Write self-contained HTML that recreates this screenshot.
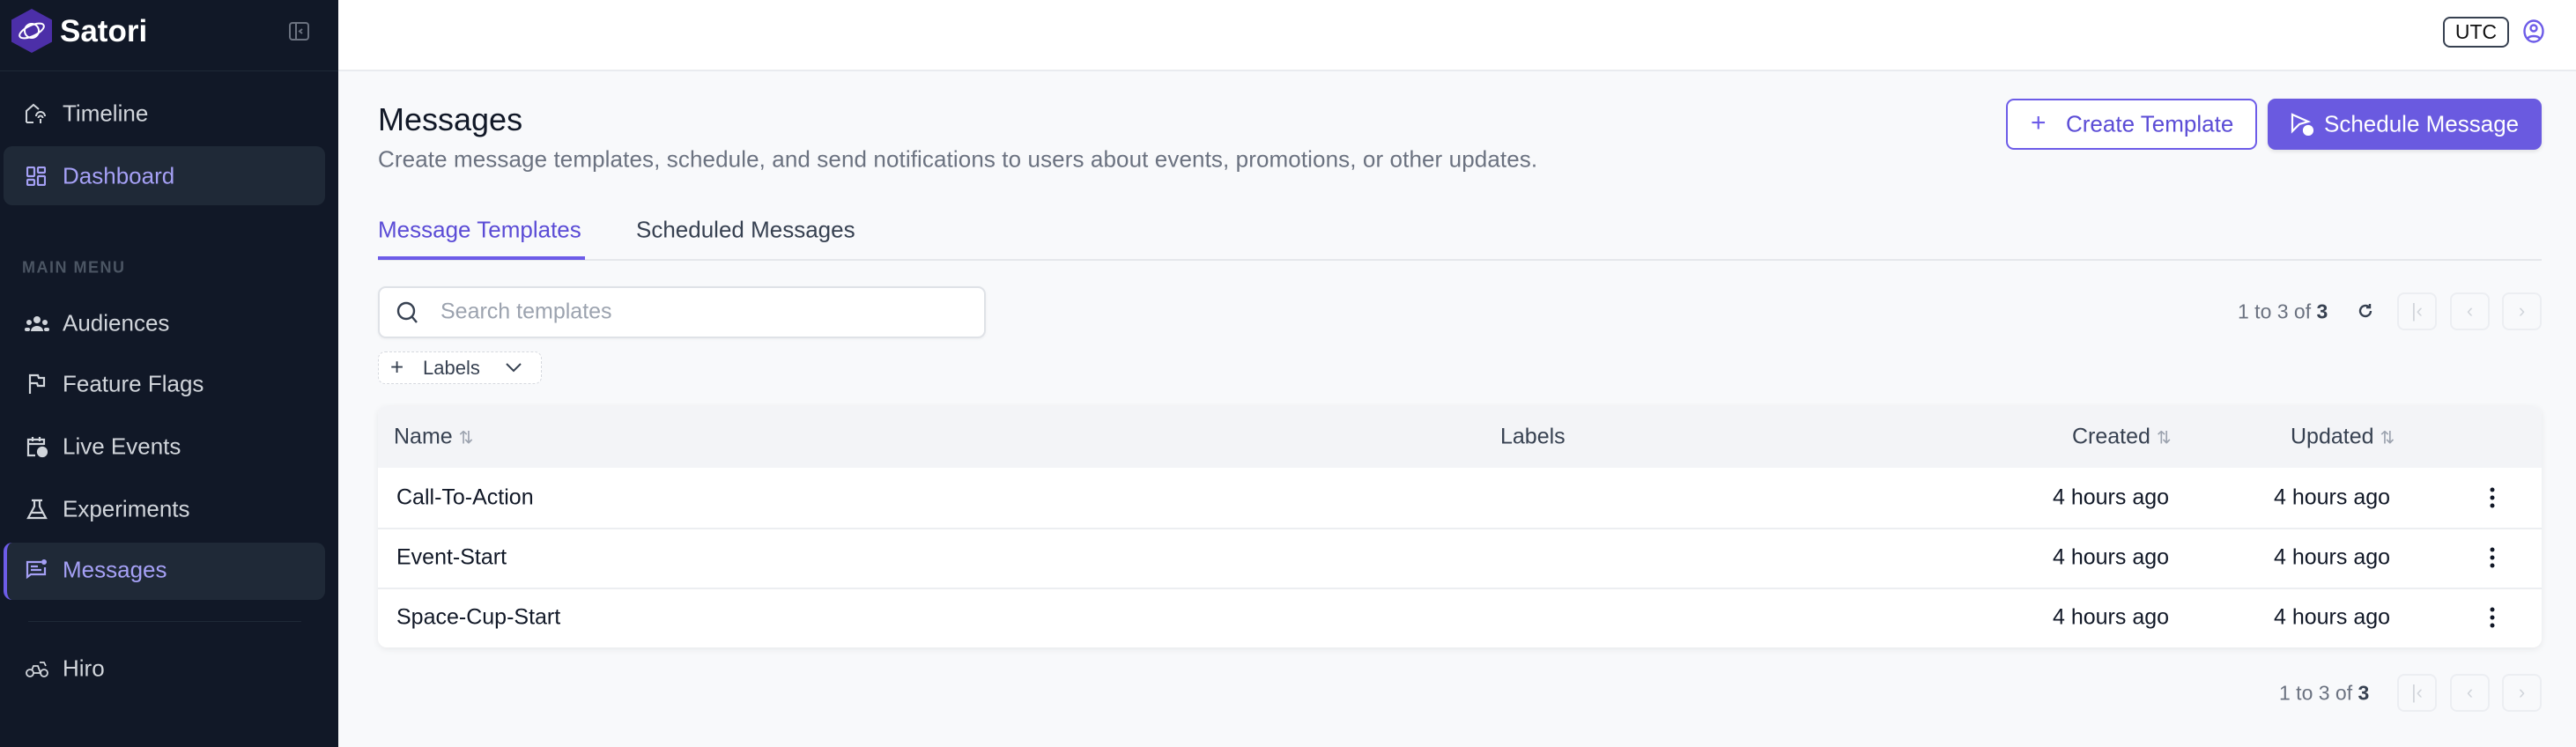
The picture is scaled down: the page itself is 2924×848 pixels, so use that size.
<!DOCTYPE html>
<html><head><meta charset="utf-8"><style>
*{box-sizing:border-box;margin:0;padding:0}
body{width:2924px;height:848px;overflow:hidden;font-family:"Liberation Sans",sans-serif;background:#f8f9fb;position:relative}
.sb{position:absolute;left:0;top:0;width:384px;height:848px;background:#111827}
.abs{position:absolute}
.nav{position:absolute;left:71px;font-size:26px;color:#d1d5db;transform:translateY(-50%);white-space:nowrap}
.ico{position:absolute;left:28px;transform:translateY(-50%)}
.act{position:absolute;left:4px;width:365px;background:#1f2937;border-radius:10px}
.main-h{position:absolute;left:384px;top:0;width:2540px;height:81px;background:#fff;border-bottom:2px solid #e9ebef}
.t{position:absolute;white-space:nowrap;transform:translateY(-50%)}
.pb{position:absolute;width:45px;height:43px;border:2px solid #eceef2;border-radius:8px;color:#d1d5db;font-size:22px;text-align:center;line-height:38px}
</style></head><body>
<div class="sb">
  <svg class="abs" style="left:13px;top:10px" width="46" height="50" viewBox="0 0 46 50"><polygon points="23,0 46,12.5 46,37.5 23,50 0,37.5 0,12.5" fill="#4c2fa8"/><ellipse cx="23" cy="25" rx="15" ry="6" fill="none" stroke="#fff" stroke-width="2" transform="rotate(-25 23 25)"/><circle cx="23" cy="25" r="8" fill="none" stroke="#fff" stroke-width="2"/></svg>
  <div class="abs" style="left:68px;top:16px;font-size:35px;font-weight:bold;color:#fff">Satori</div>
  <svg class="abs" style="left:328px;top:24px" width="23" height="23" viewBox="0 0 23 23" fill="none" stroke="#6b7280" stroke-width="2"><rect x="1" y="2" width="21" height="19" rx="3"/><line x1="8" y1="2" x2="8" y2="21"/><path d="M15 9l-3 2.5 3 2.5"/></svg>
  <div class="abs" style="left:0;top:80px;width:384px;height:1px;background:#1f2937"></div>

  <svg class="ico" style="top:129px" width="26" height="24" viewBox="0 0 26 24" fill="none" stroke="#d1d5db" stroke-width="2"><path d="M2 22V9l8-7 6 5"/><path d="M2 22h8"/><path d="M13 15a5 5 0 0 1 10 0M15.5 17a2.5 2.5 0 0 1 5 0"/><line x1="18" y1="18" x2="18" y2="23"/></svg>
  <div class="nav" style="top:129px">Timeline</div>
  <div class="act" style="top:166px;height:67px"></div>
  <svg class="ico" style="top:200px;left:30px" width="22" height="22" viewBox="0 0 22 22" fill="none" stroke="#a5a0f5" stroke-width="2.2"><rect x="1" y="1" width="8" height="10" rx="1"/><rect x="13" y="1" width="8" height="6" rx="1"/><rect x="1" y="15" width="8" height="6" rx="1"/><rect x="13" y="11" width="8" height="10" rx="1"/></svg>
  <div class="nav" style="top:200px;color:#a5a0f5">Dashboard</div>
  <div class="nav" style="top:304px;left:25px;font-size:18px;font-weight:bold;color:#4b5563;letter-spacing:1.5px">MAIN MENU</div>
  <svg class="ico" style="top:367px" width="28" height="20" viewBox="0 0 28 20" fill="#d1d5db"><circle cx="14" cy="6" r="4"/><path d="M7 19a7 6 0 0 1 14 0z"/><circle cx="5" cy="9" r="3"/><circle cx="23" cy="9" r="3"/><rect x="0" y="15" width="6" height="4" rx="2"/><rect x="22" y="15" width="6" height="4" rx="2"/></svg>
  <div class="nav" style="top:367px">Audiences</div>
  <svg class="ico" style="top:436px;left:32px" width="20" height="24" viewBox="0 0 20 24" fill="none" stroke="#d1d5db" stroke-width="2.2"><path d="M2 23V2h9l1 3h6v9h-7l-1-3H2"/></svg>
  <div class="nav" style="top:436px">Feature Flags</div>
  <svg class="ico" style="top:507px;left:30px" width="24" height="26" viewBox="0 0 24 26" fill="none" stroke="#d1d5db" stroke-width="2.2"><path d="M10 23H2V5h18v6M2 10h18M7 2v5M15 2v5"/><circle cx="18" cy="19" r="5" fill="#d1d5db"/></svg>
  <div class="nav" style="top:507px">Live Events</div>
  <svg class="ico" style="top:578px;left:30px" width="24" height="24" viewBox="0 0 24 24" fill="none" stroke="#d1d5db" stroke-width="2.2"><path d="M6 2h12M9 2v7L2 22h20L15 9V2"/><path d="M5 16h14" /></svg>
  <div class="nav" style="top:578px">Experiments</div>
  <div class="act" style="top:616px;height:65px;border-left:4px solid #6d5ce8"></div>
  <svg class="ico" style="top:647px;left:29px" width="26" height="26" viewBox="0 0 26 26" fill="none" stroke="#a5a0f5" stroke-width="2.2"><path d="M18 4H2v17l4-3h16v-8"/><path d="M6 9h8M6 13h12"/><circle cx="21" cy="4" r="3" fill="#a5a0f5" stroke="none"/></svg>
  <div class="nav" style="top:647px;color:#a5a0f5">Messages</div>
  <div class="abs" style="left:32px;top:705px;width:310px;height:1px;background:#1f2937"></div>
  <svg class="ico" style="top:759px" width="28" height="22" viewBox="0 0 28 22" fill="none" stroke="#d1d5db" stroke-width="1.8"><circle cx="6" cy="16" r="4"/><circle cx="22" cy="16" r="4"/><path d="M10 16h8l-3-8h-5l-2 5M17 4h5l2 4"/></svg>
  <div class="nav" style="top:759px">Hiro</div>
</div>

<div class="main-h"></div>
<div class="abs" style="left:2773px;top:19px;width:75px;height:35px;border:2px solid #374151;border-radius:8px;font-size:23px;color:#111;text-align:center;line-height:31px">UTC</div>
<svg class="abs" style="left:2864px;top:22px" width="24" height="27" viewBox="0 0 24 27" fill="none" stroke="#6d5ce8" stroke-width="2.4"><ellipse cx="12" cy="13.5" rx="10.5" ry="12"/><circle cx="12" cy="10" r="3.5"/><path d="M5 22c2-4 12-4 14 0"/></svg>

<div class="t" style="left:429px;top:136px;font-size:36px;color:#111827">Messages</div>
<div class="t" style="left:429px;top:181px;font-size:26px;letter-spacing:0.1px;color:#6b7280">Create message templates, schedule, and send notifications to users about events, promotions, or other updates.</div>

<div class="abs" style="left:2277px;top:112px;width:285px;height:58px;border:2px solid #6d5ce8;border-radius:9px;background:#fff"></div>
<div class="t" style="left:2305px;top:140px;font-size:30px;color:#6d5ce8">+</div>
<div class="t" style="left:2345px;top:141px;font-size:26px;color:#5b4cd6">Create Template</div>
<div class="abs" style="left:2574px;top:112px;width:311px;height:58px;background:#6a5ae0;border-radius:9px;box-shadow:0 2px 4px rgba(0,0,0,.1)"></div>
<svg class="abs" style="left:2600px;top:128px" width="26" height="26" viewBox="0 0 26 26" fill="none" stroke="#fff" stroke-width="2.2"><path d="M2 2l18 8-10 3-8 8z" /><circle cx="20" cy="20" r="5" fill="#fff"/></svg>
<div class="t" style="left:2638px;top:141px;font-size:26px;color:#fff">Schedule Message</div>

<div class="t" style="left:429px;top:261px;font-size:26px;color:#5b4cd6">Message Templates</div>
<div class="t" style="left:722px;top:261px;font-size:26px;color:#374151">Scheduled Messages</div>
<div class="abs" style="left:429px;top:294px;width:2456px;height:2px;background:#e5e7eb"></div>
<div class="abs" style="left:429px;top:291px;width:235px;height:4px;background:#6d5ce8"></div>

<div class="abs" style="left:429px;top:325px;width:690px;height:59px;background:#fff;border:2px solid #dfe2e7;border-radius:9px;box-shadow:0 1px 3px rgba(0,0,0,.05)"></div>
<svg class="abs" style="left:450px;top:341px" width="26" height="28" viewBox="0 0 26 28" fill="none" stroke="#374151" stroke-width="2.4"><circle cx="11" cy="12" r="9"/><path d="M18 19l5 6"/></svg>
<div class="t" style="left:500px;top:354px;font-size:25px;color:#9ca3af">Search templates</div>

<div class="abs" style="left:429px;top:399px;width:186px;height:37px;border:1.5px dashed #d6d9df;border-radius:8px;background:#fff"></div>
<div class="t" style="left:443px;top:417px;font-size:26px;color:#374151">+</div>
<div class="t" style="left:480px;top:418px;font-size:22px;color:#374151">Labels</div>
<svg class="abs" style="left:573px;top:411px" width="20" height="12" viewBox="0 0 20 12" fill="none" stroke="#374151" stroke-width="2"><path d="M2 2l8 8 8-8"/></svg>

<div class="t" style="left:2540px;top:354px;font-size:23px;color:#6b7280">1 to 3 of <b style="color:#374151">3</b></div>
<svg class="abs" style="left:2675px;top:343px" width="20" height="20" viewBox="0 0 20 20" fill="none" stroke="#374151" stroke-width="2.4"><path d="M16 10a6 6 0 1 1-2-4.5M15 2v4h-4"/></svg>
<div class="pb" style="left:2721px;top:332px">|‹</div>
<div class="pb" style="left:2781px;top:332px">‹</div>
<div class="pb" style="left:2840px;top:332px">›</div>

<div class="abs" style="left:429px;top:461px;width:2456px;height:274px;border-radius:10px;box-shadow:0 2px 8px rgba(0,0,0,.07);background:#fff;overflow:hidden">
  <div style="position:absolute;left:0;top:0;width:100%;height:70px;background:#f3f4f7"></div>
  <div style="position:absolute;left:0;top:138px;width:100%;height:2px;background:#eceef1"></div>
  <div style="position:absolute;left:0;top:206px;width:100%;height:2px;background:#eceef1"></div>
</div>
<div class="t" style="left:447px;top:496px;font-size:25px;color:#374151">Name <span style="color:#9ca3af;font-size:20px">⇅</span></div>
<div class="t" style="left:1703px;top:496px;font-size:25px;color:#374151">Labels</div>
<div class="t" style="left:2352px;top:496px;font-size:25px;color:#374151">Created <span style="color:#9ca3af;font-size:20px">⇅</span></div>
<div class="t" style="left:2600px;top:496px;font-size:25px;color:#374151">Updated <span style="color:#9ca3af;font-size:20px">⇅</span></div>

<div class="t" style="left:450px;top:565px;font-size:25px;color:#111827">Call-To-Action</div>
<div class="t" style="left:450px;top:633px;font-size:25px;color:#111827">Event-Start</div>
<div class="t" style="left:450px;top:701px;font-size:25px;color:#111827">Space-Cup-Start</div>
<div class="t" style="left:2330px;top:565px;font-size:25px;color:#111827">4 hours ago</div>
<div class="t" style="left:2330px;top:633px;font-size:25px;color:#111827">4 hours ago</div>
<div class="t" style="left:2330px;top:701px;font-size:25px;color:#111827">4 hours ago</div>
<div class="t" style="left:2581px;top:565px;font-size:25px;color:#111827">4 hours ago</div>
<div class="t" style="left:2581px;top:633px;font-size:25px;color:#111827">4 hours ago</div>
<div class="t" style="left:2581px;top:701px;font-size:25px;color:#111827">4 hours ago</div>
<svg class="abs" style="left:2824px;top:553px" width="10" height="24" viewBox="0 0 10 24" fill="#111827"><circle cx="5" cy="3" r="2.5"/><circle cx="5" cy="12" r="2.5"/><circle cx="5" cy="21" r="2.5"/></svg>
<svg class="abs" style="left:2824px;top:621px" width="10" height="24" viewBox="0 0 10 24" fill="#111827"><circle cx="5" cy="3" r="2.5"/><circle cx="5" cy="12" r="2.5"/><circle cx="5" cy="21" r="2.5"/></svg>
<svg class="abs" style="left:2824px;top:689px" width="10" height="24" viewBox="0 0 10 24" fill="#111827"><circle cx="5" cy="3" r="2.5"/><circle cx="5" cy="12" r="2.5"/><circle cx="5" cy="21" r="2.5"/></svg>

<div class="t" style="left:2587px;top:787px;font-size:23px;color:#6b7280">1 to 3 of <b style="color:#374151">3</b></div>
<div class="pb" style="left:2721px;top:765px">|‹</div>
<div class="pb" style="left:2781px;top:765px">‹</div>
<div class="pb" style="left:2840px;top:765px">›</div>
</body></html>
